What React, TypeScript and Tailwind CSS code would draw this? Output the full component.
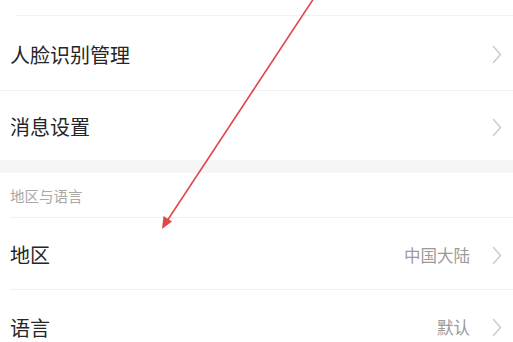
import React from 'react';

const FONT = { fontFamily: '"Noto Sans CJK SC", "Noto Sans", sans-serif' };

function Chevron() {
  return (
    <svg width="10" height="19" viewBox="0 0 10 19" className="shrink-0">
      <path d="M1.5 1.5 L8.5 9.5 L1.5 17.5" fill="none" stroke="#c9c9c9" strokeWidth="1.4" strokeLinecap="round" strokeLinejoin="round" />
    </svg>
  );
}

function Row({ label, value, height }: { label: string; value?: string; height: string }) {
  return (
    <div className={`flex items-center justify-between pl-[10px] pr-[11px] pt-[3px] ${height}`}>
      <span className="text-[20px] leading-none text-[#262626]">{label}</span>
      <div className="flex items-center gap-[22px]">
        {value && <span className="text-[16.5px] leading-none text-[#9a9a9a]">{value}</span>}
        <Chevron />
      </div>
    </div>
  );
}

export default function App() {
  return (
    <div className="relative w-[513px] h-[342px] overflow-hidden bg-white" style={FONT}>
      <div className="h-4 ml-[15px] border-b border-[#f3f3f3]" />
      <Row label="人脸识别管理" height="h-[74px]" />
      <div className="border-b border-[#f0f0f0]" />
      <Row label="消息设置" height="h-[69px]" />
      <div className="h-[13px] bg-[#f5f5f5]" />
      <div className="h-[44px] flex items-center pl-[10px] pt-[3px]">
        <span className="text-[14.5px] leading-none text-[#a8a8a8]">地区与语言</span>
      </div>
      <div className="ml-[10px] border-b border-[#f0f0f0]" />
      <Row label="地区" value="中国大陆" height="h-[71px]" />
      <div className="ml-[10px] border-b border-[#f0f0f0]" />
      <Row label="语言" value="默认" height="h-[72px]" />

      <svg className="absolute inset-0 pointer-events-none" width="513" height="342" viewBox="0 0 513 342">
        <line x1="314" y1="-2" x2="167" y2="221" stroke="#e04848" strokeWidth="1.6" />
        <polygon points="162,229 163.5,216 172,221.5" fill="#e04848" />
      </svg>
    </div>
  );
}
